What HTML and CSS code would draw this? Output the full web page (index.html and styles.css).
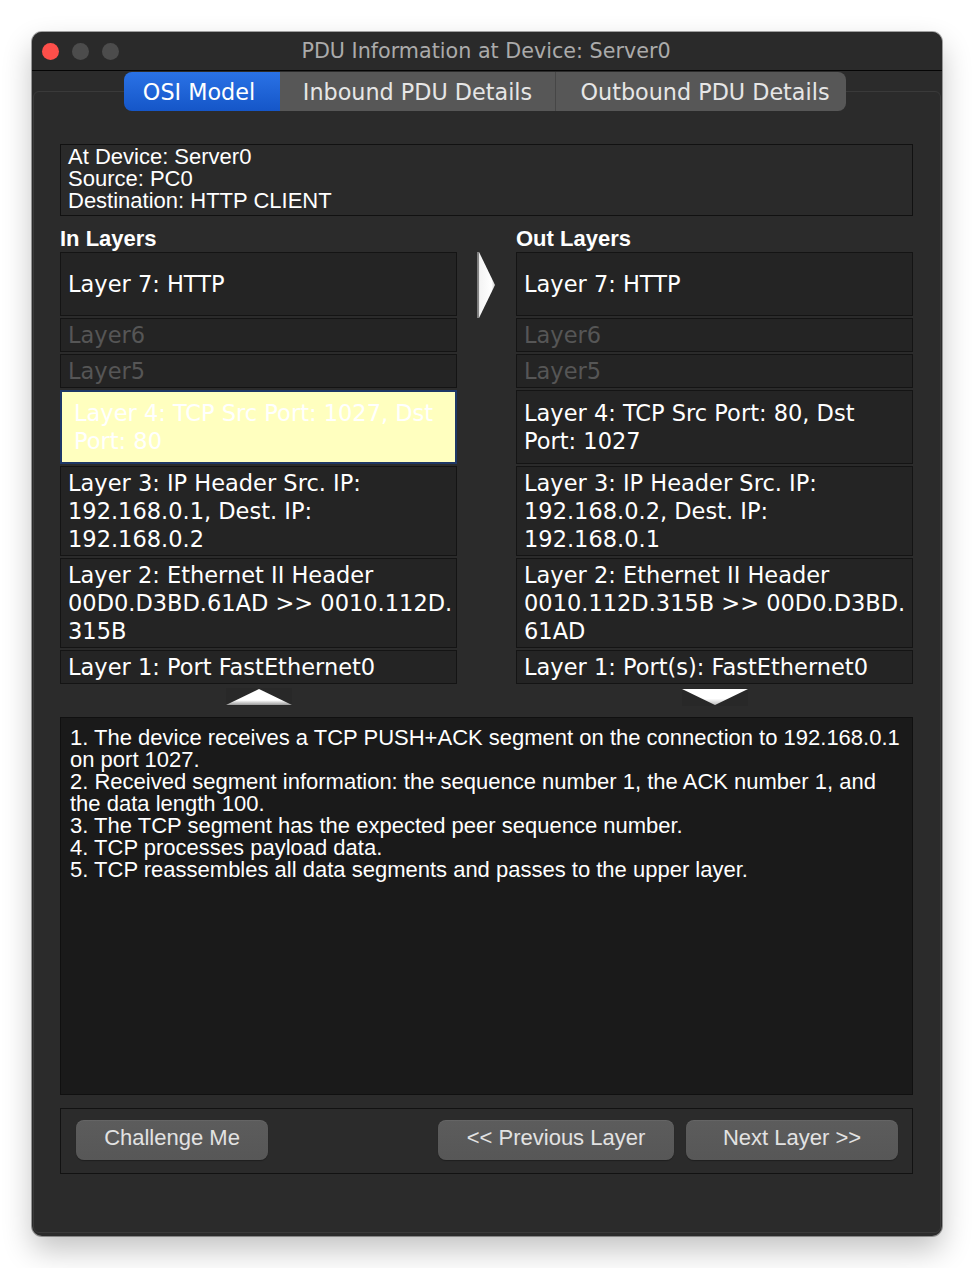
FILE: index.html
```html
<!DOCTYPE html>
<html>
<head>
<meta charset="utf-8">
<title>PDU Information at Device: Server0</title>
<link rel="stylesheet" href="styles.css">
</head>
<body>
<div class="window">
  <div class="titlebar">
    <div class="lights"><span class="light red"></span><span class="light"></span><span class="light"></span></div>
    <div class="title">PDU Information at Device: Server0</div>
    <div></div>
  </div>
  <div class="content">
    <div class="tabs">
      <div class="tab tab-osi active">OSI Model</div>
      <div class="tab tab-in">Inbound PDU Details</div>
      <div class="tab tab-out">Outbound PDU Details</div>
    </div>
    <div class="pane">
      <div class="info">At Device: Server0<br>Source: PC0<br>Destination: HTTP CLIENT</div>
      <div class="layers">
        <div class="col">
          <div class="col-title">In Layers</div>
          <div class="stack">
            <div class="layer h64">Layer 7: HTTP</div>
            <div class="layer h34 off">Layer6</div>
            <div class="layer h34 off">Layer5</div>
            <div class="layer h74 selected">Layer 4: TCP Src Port: 1027, Dst<br>Port: 80</div>
            <div class="layer h90">Layer 3: IP Header Src. IP:<br>192.168.0.1, Dest. IP:<br>192.168.0.2</div>
            <div class="layer h90">Layer 2: Ethernet II Header<br>00D0.D3BD.61AD &gt;&gt; 0010.112D.<br>315B</div>
            <div class="layer h34">Layer 1: Port FastEthernet0</div>
          </div>
          <div class="nav-arrow">
            <svg width="66" height="18" viewBox="0 0 66 18">
              <defs>
                <linearGradient id="upg" x1="0" y1="0" x2="0" y2="1">
                  <stop offset="0" stop-color="#ffffff"/>
                  <stop offset="0.7" stop-color="#ffffff"/>
                  <stop offset="1" stop-color="#9a9a9a"/>
                </linearGradient>
              </defs>
              <rect width="66" height="18" fill="#282828"/>
              <polygon points="0,17 33,1 66,17" fill="url(#upg)"/>
            </svg>
          </div>
        </div>
        <div class="mid">
          <svg width="18" height="66" viewBox="0 0 18 66">
            <defs>
              <linearGradient id="rg" x1="0" y1="0" x2="1" y2="0">
                <stop offset="0" stop-color="#7a7a7a"/>
                <stop offset="0.12" stop-color="#8a8a8a"/>
                <stop offset="0.14" stop-color="#f4f4f4"/>
                <stop offset="0.8" stop-color="#ffffff"/>
                <stop offset="1" stop-color="#cfcfcf"/>
              </linearGradient>
            </defs>
            <polygon points="0,0 2,0 18,33 2,66 0,66" fill="url(#rg)"/>
          </svg>
        </div>
        <div class="col">
          <div class="col-title">Out Layers</div>
          <div class="stack">
            <div class="layer h64">Layer 7: HTTP</div>
            <div class="layer h34 off">Layer6</div>
            <div class="layer h34 off">Layer5</div>
            <div class="layer h74">Layer 4: TCP Src Port: 80, Dst<br>Port: 1027</div>
            <div class="layer h90">Layer 3: IP Header Src. IP:<br>192.168.0.2, Dest. IP:<br>192.168.0.1</div>
            <div class="layer h90">Layer 2: Ethernet II Header<br>0010.112D.315B &gt;&gt; 00D0.D3BD.<br>61AD</div>
            <div class="layer h34">Layer 1: Port(s): FastEthernet0</div>
          </div>
          <div class="nav-arrow">
            <svg width="66" height="18" viewBox="0 0 66 18">
              <defs>
                <linearGradient id="dng" x1="0" y1="0" x2="0" y2="1">
                  <stop offset="0" stop-color="#ffffff"/>
                  <stop offset="0.6" stop-color="#ffffff"/>
                  <stop offset="1" stop-color="#bdbdbd"/>
                </linearGradient>
              </defs>
              <rect width="66" height="18" fill="#282828"/>
              <polygon points="0,1 66,1 33,17" fill="url(#dng)"/>
            </svg>
          </div>
        </div>
      </div>
      <div class="desc">1. The device receives a TCP PUSH+ACK segment on the connection to 192.168.0.1<br>on port 1027.<br>2. Received segment information: the sequence number 1, the ACK number 1, and<br>the data length 100.<br>3. The TCP segment has the expected peer sequence number.<br>4. TCP processes payload data.<br>5. TCP reassembles all data segments and passes to the upper layer.</div>
      <div class="buttons">
        <div class="btn btn-challenge">Challenge Me</div>
        <div class="btn btn-prev">&lt;&lt; Previous Layer</div>
        <div class="btn btn-next">Next Layer &gt;&gt;</div>
      </div>
    </div>
  </div>
</div>
</body>
</html>
```
FILE: styles.css
```css
html, body {
  margin: 0;
  padding: 0;
  background: #ffffff;
}

body {
  width: 974px;
  height: 1268px;
  overflow: hidden;
}

.window {
  margin: 32px 0 0 32px;
  width: 910px;
  height: 1204px;
  background: #2b2b2b;
  border-radius: 10px;
  overflow: hidden;
  display: flex;
  flex-direction: column;
  box-shadow: 0 14px 30px rgba(0, 0, 0, 0.24), 0 0 0 1px rgba(0, 0, 0, 0.35);
}

.titlebar {
  height: 38px;
  flex: none;
  background: #2a2a2a;
  border-bottom: 1px solid #050505;
  display: grid;
  grid-template-columns: 1fr auto 1fr;
  align-items: center;
}

.lights {
  display: flex;
  gap: 13px;
  padding-left: 10px;
}

.light {
  width: 17px;
  height: 17px;
  border-radius: 50%;
  background: #4c4c4c;
}

.light.red {
  background: #fe4f4a;
}

.title {
  font-family: "DejaVu Sans", sans-serif;
  font-size: 20.7px;
  color: #ababab;
  padding-right: 2px;
  white-space: nowrap;
}

.content {
  flex: 1;
  display: flex;
  flex-direction: column;
}

.tabs {
  margin-top: 1px;
  height: 39px;
  display: flex;
  justify-content: center;
  padding-right: 4px;
  position: relative;
  z-index: 2;
}

.tab {
  height: 39px;
  display: flex;
  align-items: center;
  justify-content: center;
  font-family: "DejaVu Sans", sans-serif;
  font-size: 22.3px;
  color: #e6e6e6;
  background: #575757;
  white-space: nowrap;
  box-sizing: border-box;
}

.tab-osi {
  width: 156px;
  border-radius: 8px 0 0 8px;
  background: linear-gradient(#2a72e6, #1556c8);
  color: #ffffff;
  padding-right: 6px;
}

.tab-in {
  width: 276px;
  border-right: 1px solid #464646;
}

.tab-out {
  width: 290px;
  border-radius: 0 8px 8px 0;
  padding-left: 8px;
}

.pane {
  flex: 1;
  margin: -20px 1px 3px 1px;
  border: 1px solid #3a3a3a;
  border-radius: 6px;
  padding: 52px 27px 0 26px;
  display: flex;
  flex-direction: column;
}

.info {
  height: 72px;
  box-sizing: border-box;
  border: 1px solid #111111;
  background: #2a2a2a;
  padding: 1px 7px 0 7px;
  font-family: "Liberation Sans", Arial, sans-serif;
  font-size: 22px;
  line-height: 22px;
  color: #ffffff;
  white-space: nowrap;
}

.layers {
  display: grid;
  grid-template-columns: 397px 1fr 397px;
}

.col {
  display: flex;
  flex-direction: column;
}

.col-title {
  margin-top: 12px;
  margin-bottom: 2px;
  height: 22px;
  line-height: 22px;
  font-family: "Liberation Sans", Arial, sans-serif;
  font-weight: bold;
  font-size: 22px;
  color: #ffffff;
}

.stack {
  display: flex;
  flex-direction: column;
  gap: 2px;
}

.layer {
  box-sizing: border-box;
  border: 1px solid #141414;
  background: #242424;
  padding: 0 7px;
  display: flex;
  align-items: center;
  font-family: "DejaVu Sans", sans-serif;
  font-size: 22.5px;
  line-height: 28px;
  color: #ffffff;
  white-space: nowrap;
  overflow: hidden;
}

.layer.off {
  color: #565656;
}

.layer.selected {
  background: #ffffbf;
  border: 2px solid #1e3766;
  padding-left: 12px;
  color: #ffffff;
}

.h34 { height: 34px; }
.h64 { height: 64px; }
.h74 { height: 74px; }
.h90 { height: 90px; }

.nav-arrow {
  margin-top: 4px;
  height: 18px;
  display: flex;
  justify-content: center;
}

.nav-arrow svg,
.mid svg {
  display: block;
}

.mid {
  padding-top: 36px;
  display: flex;
  justify-content: center;
  padding-right: 1px;
}

.desc {
  margin-top: 11px;
  height: 378px;
  box-sizing: border-box;
  background: #1a1a1a;
  border: 1px solid #101010;
  padding: 9px 9px;
  font-family: "Liberation Sans", Arial, sans-serif;
  font-size: 22px;
  line-height: 22px;
  color: #ffffff;
  white-space: nowrap;
  overflow: hidden;
}

.buttons {
  margin-top: 13px;
  height: 66px;
  box-sizing: border-box;
  border: 1px solid #121212;
  padding: 11px 14px 0 15px;
  display: flex;
  gap: 12px;
}

.btn {
  height: 40px;
  box-sizing: border-box;
  border-radius: 8px;
  background: linear-gradient(#5c5c5c, #575757);
  box-shadow: inset 0 1px 0 rgba(255, 255, 255, 0.06), 0 1px 1px rgba(0, 0, 0, 0.3);
  display: flex;
  align-items: center;
  justify-content: center;
  padding-bottom: 4px;
  font-family: "Liberation Sans", Arial, sans-serif;
  font-size: 22px;
  color: #e2e2e2;
  white-space: nowrap;
}

.btn-challenge { width: 192px; }
.btn-prev { width: 236px; margin-left: auto; }
.btn-next { width: 212px; }
```
